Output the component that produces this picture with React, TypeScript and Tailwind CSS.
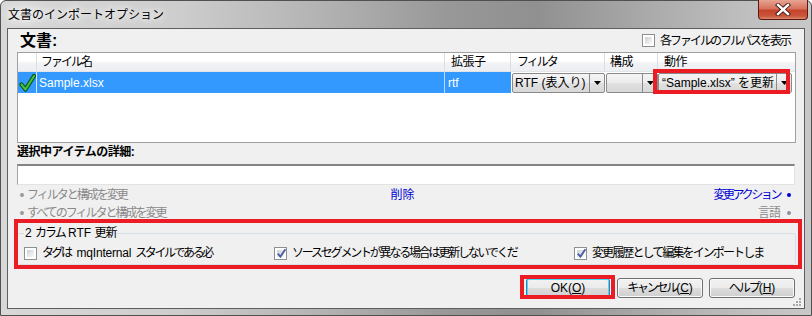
import React from "react";

function Check({ checked }: { checked?: boolean }) {
  return (
    <span className="relative flex w-[13px] h-[13px] shrink-0 border border-[#8e8f8f] bg-white p-[2px]">
      <span className="block w-full h-full bg-[linear-gradient(135deg,#cbcfd5_0%,#e6e8eb_55%,#f8f8f8_100%)]" />
      {checked && (
        <svg className="absolute left-[1px] top-[0px]" width="11" height="11" viewBox="0 0 11 11">
          <path d="M1.8 5.6 L4.4 8.6 L9.4 1.2" fill="none" stroke="#4d62a5" strokeWidth="2" />
        </svg>
      )}
    </span>
  );
}

function Arrow() {
  return (
    <svg width="7" height="4" viewBox="0 0 7 4">
      <path d="M0 0H7L3.5 4Z" fill="#000" />
    </svg>
  );
}

function Combo({ text, className }: { text?: React.ReactNode; className?: string }) {
  return (
    <div
      className={`flex h-[20px] border border-[#8a8a8a] rounded-[2px] bg-[linear-gradient(#f4f4f4_0%,#ececec_50%,#e1e1e1_50%,#d8d8d8_100%)] text-black ${className ?? ""}`}
    >
      <div className="flex-1 flex items-center pl-[2px] overflow-hidden whitespace-nowrap">{text}</div>
      <div className="w-[15px] border-l border-[#8a8a8a] flex items-center justify-center">
        <Arrow />
      </div>
    </div>
  );
}

function Btn({ children, def, className }: { children: React.ReactNode; def?: boolean; className?: string }) {
  return (
    <div
      className={`h-[20px] rounded-[3px] border ${def ? "border-[#3c7fb1] shadow-[inset_0_0_0_1px_#48d8f8]" : "border-[#707070] shadow-[inset_0_0_0_1px_#fbfbfb]"} bg-[linear-gradient(#f2f2f2_0%,#ebebeb_50%,#dddddd_50%,#cfcfcf_100%)] flex items-center justify-center ${className ?? ""}`}
    >
      {children}
    </div>
  );
}

function Bullet({ color }: { color: string }) {
  return <span className={`inline-block w-[4px] h-[4px] rounded-full ${color}`} />;
}

export default function App() {
  return (
    <div className="relative w-[812px] h-[316px] overflow-hidden bg-white font-['Liberation_Sans','Noto_Sans_CJK_JP',sans-serif] text-[12px] leading-none text-black">
      <div className="flex flex-col w-full h-full rounded-t-[6px] border border-[#505050] bg-[linear-gradient(90deg,#d8d8d8_0%,#cdcdcd_22%,#b2b2b2_40%,#989898_55%,#909090_66%,#aaaaaa_80%,#bfbfbf_92%,#c8c8c8_100%)]">
        {/* title bar */}
        <div className="h-[27px] flex items-start shrink-0">
          <div className="pl-[7px] h-[27px] flex items-center pb-[1px] font-['Noto_Sans_CJK_JP',sans-serif] text-[12px] [text-shadow:0_0_6px_#ffffff,0_0_10px_#ffffff,0_0_14px_#ffffff]">
            文書のインポートオプション
          </div>
          <div className="ml-auto mr-[3px] mt-[-1px] w-[50px] h-[20px] rounded-b-[4px] border border-[#5a1a12] border-t-0 bg-[linear-gradient(#e8a493_0%,#d7725e_45%,#c4452b_55%,#c9563c_85%,#dc8a6e_100%)] flex items-center justify-center">
            <svg width="16" height="13" viewBox="0 0 16 13">
              <path d="M3 2 L13 11 M13 2 L3 11" stroke="#3d1510" strokeWidth="4.2" strokeLinecap="square" />
              <path d="M3 2 L13 11 M13 2 L3 11" stroke="#ffffff" strokeWidth="2.4" strokeLinecap="square" />
            </svg>
          </div>
        </div>

        {/* frame sides */}
        <div className="flex-1 flex px-[6px] pb-[6px]">
          <div className="relative flex-1 flex flex-col bg-[#f0f0f0] border border-[#5e5e5e]">
            {/* header */}
            <div className="h-[23px] flex items-center pl-[12px] pr-[14px]">
              <span className="text-[16px] font-bold">文書:</span>
              <div className="ml-auto flex items-center gap-[5px]">
                <Check />
                <span className="tracking-[-2px]">各ファイルのフルパスを表示</span>
              </div>
            </div>

            {/* table */}
            <div className="h-[91px] ml-[9px] mr-[8px] border border-[#a0a0a0] bg-white flex flex-col">
              <div className="grid grid-cols-[19px_408px_66px_94px_53px_1fr] h-[19px] bg-[linear-gradient(#ffffff_0%,#ffffff_45%,#f2f3f5_55%,#eceef1_100%)] border-b border-[#e3e4e6]">
                <div className="border-r border-[#dcdde0]" />
                <div className="border-r border-[#dcdde0] flex items-center pl-[4px] tracking-[-2px]">ファイル名</div>
                <div className="border-r border-[#dcdde0] flex items-center pl-[6px] tracking-[-0.5px]">拡張子</div>
                <div className="border-r border-[#dcdde0] flex items-center pl-[6px] tracking-[-2px]">フィルタ</div>
                <div className="border-r border-[#dcdde0] flex items-center pl-[5px] tracking-[-0.5px]">構成</div>
                <div className="flex items-center pl-[6px] tracking-[-0.5px]">動作</div>
              </div>
              <div className="grid grid-cols-[19px_408px_66px_94px_53px_1fr] h-[21px] bg-[#3399ff] text-white">
                <div className="border-r border-[#d6e9ff] flex items-center justify-center">
                  <svg width="17" height="18" viewBox="0 0 17 18">
                    <path d="M2.5 10.5 L6.5 15.5 L15 2" fill="none" stroke="#0b4a0b" strokeWidth="4.2" strokeLinejoin="round" strokeLinecap="round" />
                    <path d="M2.5 10.5 L6.5 15.5 L15 2" fill="none" stroke="#3fc43f" strokeWidth="2.2" strokeLinejoin="round" strokeLinecap="round" />
                  </svg>
                </div>
                <div className="border-r border-[#b9dbff] flex items-center pl-[2px]">Sample.xlsx</div>
                <div className="flex items-center pl-[3px]">rtf</div>
                <div className="flex items-center pl-[1px] bg-white">
                  <Combo className="w-[93px]" text={<span>RTF (表入り)</span>} />
                </div>
                <div className="flex items-center pl-[1px] bg-white">
                  <Combo className="w-[52px]" />
                </div>
                <div className="flex items-center bg-white">
                  <Combo className="w-[134px]" text={<span className="pl-[1px]">“Sample.xlsx” を更新</span>} />
                </div>
              </div>
            </div>

            {/* details */}
            <div className="h-[21px] flex items-center pl-[9px] pb-[3px] font-bold tracking-[-0.5px]">選択中アイテムの詳細:</div>
            <div className="h-[21px] ml-[9px] mr-[9px] bg-white border-t-2 border-t-[#848484] border-l border-l-[#a4a4a4] border-r border-r-[#e3e3e3] border-b border-b-[#e3e3e3]" />

            {/* link rows */}
            <div className="h-[19px] grid grid-cols-[1fr_auto_1fr] items-center pl-[12px] pr-[13px]">
              <div className="flex items-center gap-[3px] text-[#8a8a8a]">
                <Bullet color="bg-[#9a9a9a]" />
                <span className="tracking-[-2px]">フィルタと構成を変更</span>
              </div>
              <div className="text-[#0000d0] pr-[6px]">削除</div>
              <div className="flex items-center justify-end gap-[7px] text-[#0000d0]">
                <span className="tracking-[-2.4px]">変更アクション</span>
                <Bullet color="bg-[#0000d0]" />
              </div>
            </div>
            <div className="h-[17px] flex items-center pl-[12px] pr-[13px]">
              <div className="flex items-center gap-[3px] text-[#8a8a8a]">
                <Bullet color="bg-[#9a9a9a]" />
                <span className="tracking-[-2px]">すべてのフィルタと構成を変更</span>
              </div>
              <div className="ml-auto flex items-center gap-[7px] text-[#8a8a8a]">
                <span className="tracking-[-1px]">言語</span>
                <Bullet color="bg-[#8c8fa8]" />
              </div>
            </div>

            {/* group box */}
            <fieldset className="mt-[5px] ml-[9px] mr-[8px] border border-[#d5dfe5] rounded-[3px] px-[6px] pt-[3px] pb-[1px]">
              <legend className="px-[1px] leading-[14px]">
                2 <span className="tracking-[-2px]">カラム</span> RTF <span className="tracking-[-1px]">更新</span>
              </legend>
              <div className="h-[20px] flex items-center">
                <div className="w-[250px] flex items-center gap-[5px]">
                  <Check />
                  <span className="flex items-center whitespace-nowrap">
                    <span className="tracking-[-2.5px]">タグは</span>
                    <span className="ml-[6px] tracking-[-0.2px]">mqInternal</span>
                    <span className="ml-[4px] tracking-[-2.4px]">スタイルである必</span>
                  </span>
                </div>
                <div className="w-[300px] flex items-center gap-[5px]">
                  <Check checked />
                  <span className="tracking-[-2.2px]">ソースセグメントが異なる場合は更新しないでくだ</span>
                </div>
                <div className="flex items-center gap-[5px]">
                  <Check checked />
                  <span className="tracking-[-1.9px]">変更履歴として編集をインポートしま</span>
                </div>
              </div>
            </fieldset>

            {/* buttons */}
            <div className="mt-[13px] flex justify-end pr-[9px]">
              <Btn def className="w-[84px]">
                <span>
                  OK(<span className="underline">O</span>)
                </span>
              </Btn>
              <Btn className="w-[86px] ml-[7px]">
                <span>
                  <span className="tracking-[-2.2px]">キャンセル</span>(<span className="underline">C</span>)
                </span>
              </Btn>
              <Btn className="w-[86px] ml-[6px]">
                <span>
                  <span className="tracking-[-2px]">ヘルプ</span>(<span className="underline">H</span>)
                </span>
              </Btn>
            </div>

            {/* size grip */}
            <svg className="absolute right-[3px] bottom-[2px]" width="8" height="8" viewBox="0 0 8 8">
              <g fill="#a8a8a8">
                <rect x="6" y="0" width="2" height="2" />
                <rect x="3" y="3" width="2" height="2" />
                <rect x="6" y="3" width="2" height="2" />
                <rect x="0" y="6" width="2" height="2" />
                <rect x="3" y="6" width="2" height="2" />
                <rect x="6" y="6" width="2" height="2" />
              </g>
            </svg>
          </div>
        </div>
      </div>

      {/* red annotation boxes */}
      <div className="absolute left-[653px] top-[69px] w-[137px] h-[25px] border-4 border-[#ec1c24]" />
      <div className="absolute left-[14px] top-[219px] w-[788px] h-[50px] border-4 border-[#ec1c24]" />
      <div className="absolute left-[520px] top-[275px] w-[95px] h-[24px] border-4 border-[#ec1c24]" />
    </div>
  );
}
